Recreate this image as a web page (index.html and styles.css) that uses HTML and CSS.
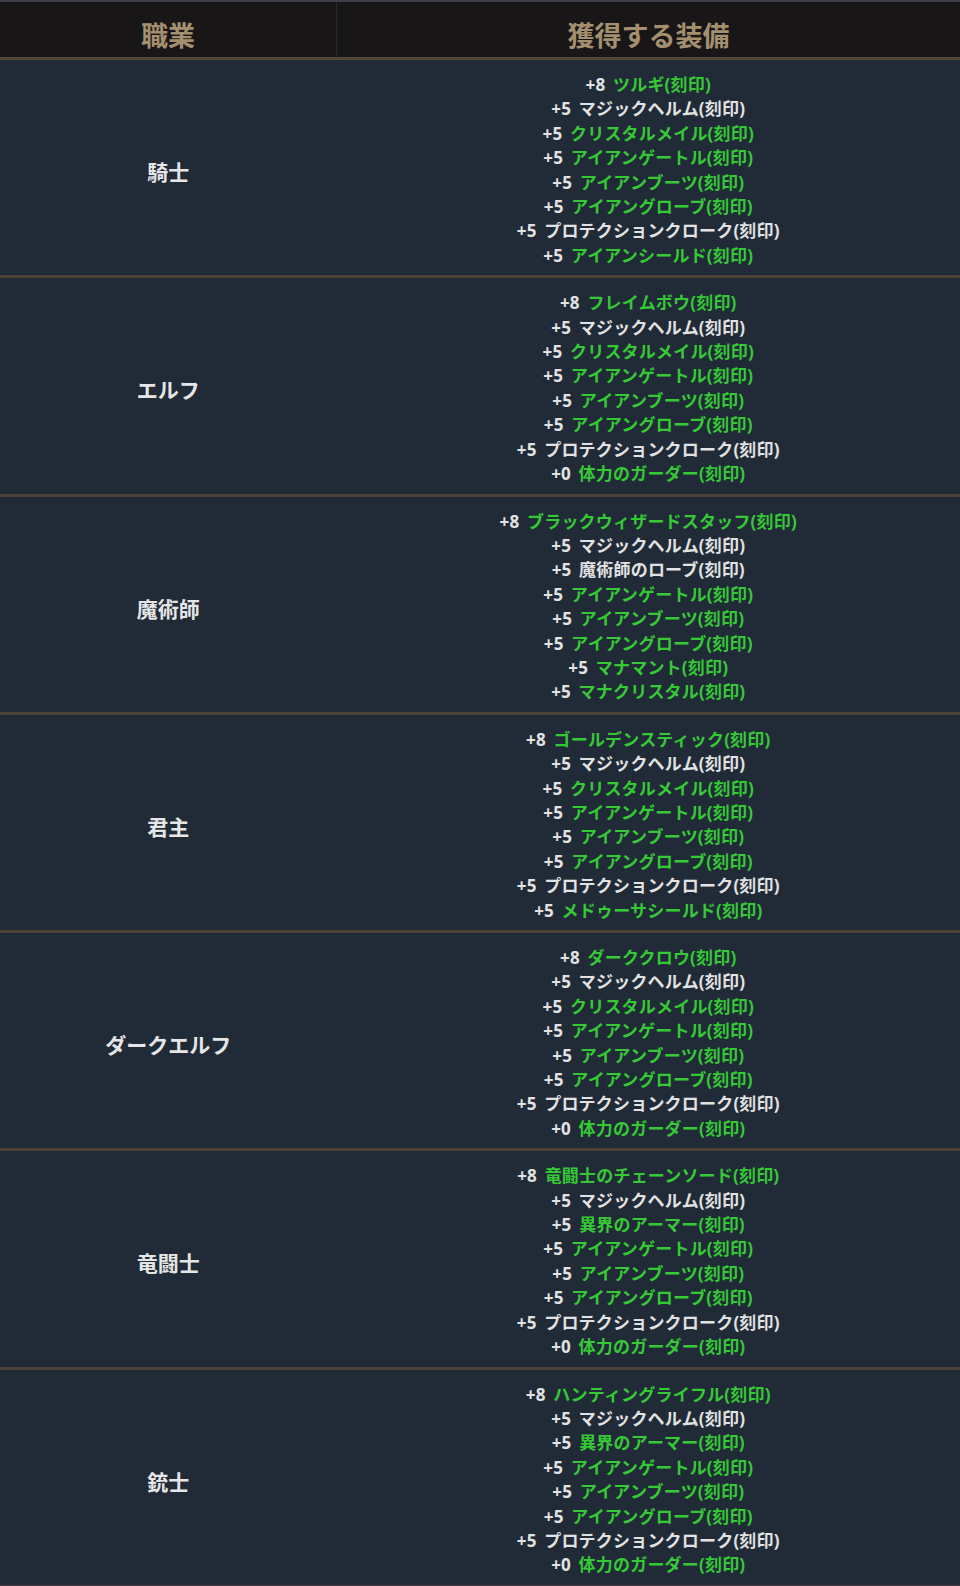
FILE: index.html
```html
<!DOCTYPE html>
<html lang="ja">
<head>
<meta charset="utf-8">
<link rel="stylesheet" href="styles.css">
</head>
<body>
<table class="gear">
  <thead>
    <tr><th class="col-job">職業</th><th class="col-gear">獲得する装備</th></tr>
  </thead>
  <tbody>
    <tr>
      <td class="job">騎士</td>
      <td class="items">
        <div>+8 <span class="g">ツルギ(刻印)</span></div>
        <div>+5 マジックヘルム(刻印)</div>
        <div>+5 <span class="g">クリスタルメイル(刻印)</span></div>
        <div>+5 <span class="g">アイアンゲートル(刻印)</span></div>
        <div>+5 <span class="g">アイアンブーツ(刻印)</span></div>
        <div>+5 <span class="g">アイアングローブ(刻印)</span></div>
        <div>+5 プロテクションクローク(刻印)</div>
        <div>+5 <span class="g">アイアンシールド(刻印)</span></div>
      </td>
    </tr>
    <tr>
      <td class="job">エルフ</td>
      <td class="items">
        <div>+8 <span class="g">フレイムボウ(刻印)</span></div>
        <div>+5 マジックヘルム(刻印)</div>
        <div>+5 <span class="g">クリスタルメイル(刻印)</span></div>
        <div>+5 <span class="g">アイアンゲートル(刻印)</span></div>
        <div>+5 <span class="g">アイアンブーツ(刻印)</span></div>
        <div>+5 <span class="g">アイアングローブ(刻印)</span></div>
        <div>+5 プロテクションクローク(刻印)</div>
        <div>+0 <span class="g">体力のガーダー(刻印)</span></div>
      </td>
    </tr>
    <tr>
      <td class="job">魔術師</td>
      <td class="items">
        <div>+8 <span class="g">ブラックウィザードスタッフ(刻印)</span></div>
        <div>+5 マジックヘルム(刻印)</div>
        <div>+5 魔術師のローブ(刻印)</div>
        <div>+5 <span class="g">アイアンゲートル(刻印)</span></div>
        <div>+5 <span class="g">アイアンブーツ(刻印)</span></div>
        <div>+5 <span class="g">アイアングローブ(刻印)</span></div>
        <div>+5 <span class="g">マナマント(刻印)</span></div>
        <div>+5 <span class="g">マナクリスタル(刻印)</span></div>
      </td>
    </tr>
    <tr>
      <td class="job">君主</td>
      <td class="items">
        <div>+8 <span class="g">ゴールデンスティック(刻印)</span></div>
        <div>+5 マジックヘルム(刻印)</div>
        <div>+5 <span class="g">クリスタルメイル(刻印)</span></div>
        <div>+5 <span class="g">アイアンゲートル(刻印)</span></div>
        <div>+5 <span class="g">アイアンブーツ(刻印)</span></div>
        <div>+5 <span class="g">アイアングローブ(刻印)</span></div>
        <div>+5 プロテクションクローク(刻印)</div>
        <div>+5 <span class="g">メドゥーサシールド(刻印)</span></div>
      </td>
    </tr>
    <tr>
      <td class="job">ダークエルフ</td>
      <td class="items">
        <div>+8 <span class="g">ダーククロウ(刻印)</span></div>
        <div>+5 マジックヘルム(刻印)</div>
        <div>+5 <span class="g">クリスタルメイル(刻印)</span></div>
        <div>+5 <span class="g">アイアンゲートル(刻印)</span></div>
        <div>+5 <span class="g">アイアンブーツ(刻印)</span></div>
        <div>+5 <span class="g">アイアングローブ(刻印)</span></div>
        <div>+5 プロテクションクローク(刻印)</div>
        <div>+0 <span class="g">体力のガーダー(刻印)</span></div>
      </td>
    </tr>
    <tr>
      <td class="job">竜闘士</td>
      <td class="items">
        <div>+8 <span class="g">竜闘士のチェーンソード(刻印)</span></div>
        <div>+5 マジックヘルム(刻印)</div>
        <div>+5 <span class="g">異界のアーマー(刻印)</span></div>
        <div>+5 <span class="g">アイアンゲートル(刻印)</span></div>
        <div>+5 <span class="g">アイアンブーツ(刻印)</span></div>
        <div>+5 <span class="g">アイアングローブ(刻印)</span></div>
        <div>+5 プロテクションクローク(刻印)</div>
        <div>+0 <span class="g">体力のガーダー(刻印)</span></div>
      </td>
    </tr>
    <tr class="last">
      <td class="job">銃士</td>
      <td class="items">
        <div>+8 <span class="g">ハンティングライフル(刻印)</span></div>
        <div>+5 マジックヘルム(刻印)</div>
        <div>+5 <span class="g">異界のアーマー(刻印)</span></div>
        <div>+5 <span class="g">アイアンゲートル(刻印)</span></div>
        <div>+5 <span class="g">アイアンブーツ(刻印)</span></div>
        <div>+5 <span class="g">アイアングローブ(刻印)</span></div>
        <div>+5 プロテクションクローク(刻印)</div>
        <div>+0 <span class="g">体力のガーダー(刻印)</span></div>
      </td>
    </tr>
  </tbody>
</table>
</body>
</html>
```

FILE: styles.css
```css
html, body {
  margin: 0;
  padding: 0;
  background: #212b38;
}

body {
  font-family: "Open Sans", "Noto Sans CJK JP", sans-serif;
  font-weight: 700;
  color: #e2e2e2;
}

.gear {
  width: 960px;
  border-collapse: collapse;
  border-top: 2px solid #3b3e45;
  table-layout: fixed;
}

.gear thead tr {
  background: #181617;
  border-bottom: 3px solid #544636;
}

.gear th {
  padding: 12px 0 0;
  font-size: 27px;
  font-weight: 700;
  color: #a48f6e;
  text-align: center;
  vertical-align: middle;
  line-height: 43px;
}

.col-job {
  width: 336px;
  border-right: 1px solid #232a35;
}

.gear tbody tr {
  border-bottom: 3px solid #4c4135;
}

.gear tbody tr.last {
  border-bottom-color: #414141;
}

.gear td {
  text-align: center;
  vertical-align: middle;
}

.job {
  padding: 17px 0 7px;
  font-size: 21px;
  line-height: 1;
  color: #e6e6e6;
}

.items {
  padding: 13px 0 7px;
  font-size: 17px;
  line-height: 24.4px;
  word-spacing: 3px;
  letter-spacing: 0.2px;
  color: #e2e2e2;
}

.g {
  color: #36c936;
}
```
